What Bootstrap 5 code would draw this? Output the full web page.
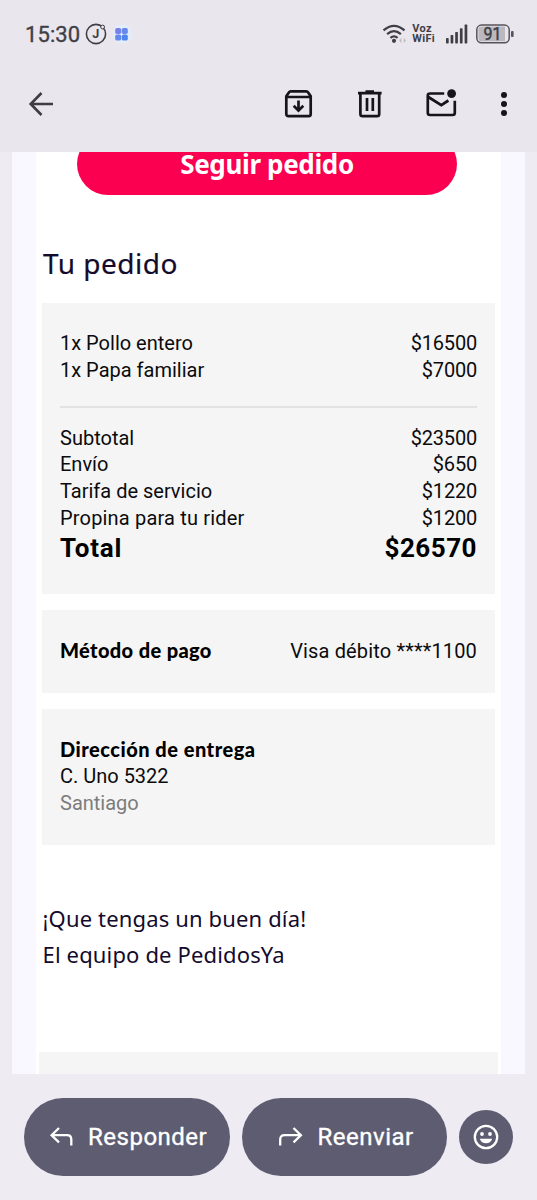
<!DOCTYPE html>
<html lang="es">
<head>
<meta charset="utf-8">
<meta name="viewport" content="width=device-width, initial-scale=1">
<title>Tu pedido</title>
<link href="https://cdn.jsdelivr.net/npm/bootstrap@5.3.0/dist/css/bootstrap.min.css" rel="stylesheet">
<style>
body{font-family:Roboto,"Liberation Sans",sans-serif;background:#eeebf3;color:#0b0b0d;height:1200px;overflow:hidden}
svg{display:block;flex:none}
.top-area{height:152px;background:#e9e6ed}
.status-bar{height:68px;padding:0 23px 0 25px;color:#413f46}
.clock{font-size:22px;letter-spacing:.1px;-webkit-text-stroke:.35px #413f46}
.voz{font-size:11px;line-height:10.5px;font-weight:700;letter-spacing:.3px}
.toolbar{height:72px;padding:0 20px 0 27px}
.mail-view{height:922px;margin:0 12px;padding:0 24.5px 0 24px;background:#f9f7ff;overflow:hidden}
.mail-body{background:#fff;height:922px}
.track-btn{width:380px;height:62px;margin:-19px 0 0 41px;background:#fb0050;color:#fff;font:700 26px "Noto Sans",sans-serif;letter-spacing:-.35px}
.order-title{font:400 28px/36px "Noto Sans",sans-serif;letter-spacing:.5px;color:#140b2c;margin:50px 0 22px 7px;-webkit-text-stroke:.2px #140b2c}
.panel{background:#f5f5f5;width:452.5px;margin:0 0 16px 6px;padding:0 17.5px 0 18px;font-size:20px;line-height:26.8px}
.panel strong{display:block;font-family:Lato,sans-serif;font-weight:900;letter-spacing:.37px;color:#000}
.items{height:291px;padding-top:27px}
.amount{letter-spacing:-.2px}
.rule{height:2px;background:#e2e2e2;margin:22px 0 17px}
.total-row{font-size:26px;line-height:32px;font-weight:700;color:#000}
.pay{height:83px}
.pay strong{position:relative;top:-1px}
.address{height:136px;padding-top:27px}
.address strong{letter-spacing:.5px}
.city{color:#7c7c7c}
.bye{font:400 22px/36px "Noto Sans",sans-serif;letter-spacing:.15px;color:#140b2c;margin:55px 0 0 6.5px}
.foot{height:22px;margin:80px 2.5px 0 3px;background:#f5f5f5}
.actions{padding:24px 24px 0;gap:12px}
.pill{width:205.7px;height:78px;background:#5e5c71;color:#fff;font-size:24px;letter-spacing:.5px;-webkit-text-stroke:.35px #fff}
.smile{width:54px;height:54px;background:#5e5c71}
</style>
</head>
<body>
<header class="top-area">
  <div class="status-bar d-flex align-items-center">
    <span class="clock">15:30</span>
    <svg class="ms-1" width="24" height="24" viewBox="0 0 24 24" fill="none" stroke="#413f46"><circle cx="12" cy="12" r="9.6" stroke-width="1.6"/><circle cx="18.6" cy="5" r="1.9" stroke-width="1" fill="#e9e6ed"/><text x="8.2" y="16" font-family="Roboto" font-size="12.5" font-weight="700" fill="#413f46" stroke="none">J</text></svg>
    <svg class="ms-1" width="20" height="20" viewBox="0 0 20 20"><circle cx="10" cy="10" r="9.5" fill="#e4eefb"/><g fill="#6689ed"><rect x="3.2" y="4" width="6" height="6" rx="1.7" fill="#7881ea"/><rect x="9.8" y="4" width="6" height="6" rx="1.7"/><rect x="3.2" y="10.6" width="6" height="6" rx="1.7"/><rect x="9.8" y="10.6" width="6" height="6" rx="1.7" fill="#4e86f0"/></g></svg>
    <div class="ms-auto d-flex align-items-center">
      <svg width="26" height="22" viewBox="0 0 26 22" fill="none" stroke="#413f46" stroke-width="2.2"><path d="M1.5 7.4Q12 -1.8 22.5 7.4M5.1 11.2Q12 5.2 18.9 11.2M8.4 14.8Q12 11.8 15.6 14.8"/><circle cx="12" cy="17.8" r="2.1" fill="#413f46" stroke="none"/><path d="M17.3 17.5l2-2.7v5.4zM23.8 17.5l-2-2.7v5.4z" fill="#bbb8be" stroke="none"/></svg>
      <div class="voz ms-1"><div>Voz</div><div>WiFi</div></div>
      <svg style="margin-left:11px" width="22" height="20" viewBox="0 0 22 20" fill="#413f46"><rect x="0" y="14" width="2.7" height="5.5" rx=".7"/><rect x="4.6" y="11" width="2.7" height="8.5" rx=".7"/><rect x="9.2" y="8" width="2.7" height="11.5" rx=".7"/><rect x="13.9" y="4.3" width="2.7" height="15.2" rx=".7"/><rect x="18.6" y=".5" width="2.7" height="19" rx=".7"/></svg>
      <svg class="ms-2" width="38" height="20" viewBox="0 0 38 20"><rect x=".8" y="1" width="32.4" height="17.8" rx="4.8" fill="none" stroke="#55535a" stroke-width="1.5"/><path d="M5.5 2.6H29V17.2H5.5Q2.4 17.2 2.4 14V5.8Q2.4 2.6 5.5 2.6Z" fill="#bbb9bd"/><rect x="35" y="7" width="2.6" height="6" rx="1" fill="#55535a"/><text x="7.4" y="16.1" font-family="Roboto" font-size="17.5" fill="#413f46" stroke="#413f46" stroke-width=".5" textLength="18" lengthAdjust="spacingAndGlyphs">91</text></svg>
    </div>
  </div>
  <nav class="toolbar d-flex align-items-center">
    <svg width="28" height="28" viewBox="0 0 28 28" fill="none" stroke="#3f3d44" stroke-width="2.6"><path d="M26 14H4M14.5 3L3.7 14l10.8 11"/></svg>
    <svg style="margin-left:229px" width="30" height="30" viewBox="0 0 30 30" fill="none" stroke="#17151b" stroke-width="2.7"><path d="M2.3 7.2L5 3.3Q5.6 2.3 6.8 2.3H22.2Q23.4 2.3 24 3.3L26.7 7.2V25Q26.7 27.2 24.5 27.2H4.5Q2.3 27.2 2.3 25ZM2.3 8H26.7"/><path d="M14.5 11.5V21M9.7 16.8l4.8 4.8 4.8-4.8"/></svg>
    <svg style="margin-left:43px" width="26" height="30" viewBox="0 0 26 30" fill="none" stroke="#17151b" stroke-width="2.7"><path d="M1 4.2H24.6M8.5 2.5H17M3.4 4.2V25Q3.4 27.2 5.6 27.2H20Q22.2 27.2 22.2 25V4.2M10 9V22M15.8 9V22"/></svg>
    <svg style="margin-left:42px" width="34" height="32" viewBox="0 0 34 32" fill="none" stroke="#17151b" stroke-width="2.7"><path d="M19.2 5.5H5Q2.8 5.5 2.8 7.7V24.8Q2.8 27 5 27H27.6Q29.8 27 29.8 24.8V12.7M3.3 9L16.3 17.2L23.4 12.5"/><circle cx="26.6" cy="5.6" r="4.4" fill="#17151b" stroke="none"/></svg>
    <svg style="margin-left:39px" width="12" height="28" viewBox="0 0 12 28" fill="#17151b"><circle cx="6" cy="5" r="3"/><circle cx="6" cy="14" r="3"/><circle cx="6" cy="23" r="3"/></svg>
  </nav>
</header>
<main class="mail-view">
  <div class="mail-body d-flow-root overflow-hidden">
    <div class="track-btn rounded-pill d-flex align-items-center justify-content-center">Seguir pedido</div>
    <h1 class="order-title">Tu pedido</h1>
    <section class="panel items">
      <div class="d-flex justify-content-between"><span>1x Pollo entero</span><span class="amount">$16500</span></div>
      <div class="d-flex justify-content-between"><span>1x Papa familiar</span><span class="amount">$7000</span></div>
      <div class="rule"></div>
      <div class="d-flex justify-content-between"><span>Subtotal</span><span class="amount">$23500</span></div>
      <div class="d-flex justify-content-between"><span>Envío</span><span class="amount">$650</span></div>
      <div class="d-flex justify-content-between"><span>Tarifa de servicio</span><span class="amount">$1220</span></div>
      <div class="d-flex justify-content-between"><span style="letter-spacing:.18px">Propina para tu rider</span><span class="amount">$1200</span></div>
      <div class="total-row d-flex justify-content-between"><span style="letter-spacing:.8px">Total</span><span style="letter-spacing:.5px">$26570</span></div>
    </section>
    <section class="panel pay d-flex align-items-center justify-content-between"><strong>Método de pago</strong><span style="letter-spacing:.15px">Visa débito ****1100</span></section>
    <section class="panel address">
      <strong>Dirección de entrega</strong>
      <div>C. Uno 5322</div>
      <div class="city">Santiago</div>
    </section>
    <p class="bye">¡Que tengas un buen día!<br>El equipo de PedidosYa</p>
    <div class="foot"></div>
  </div>
</main>
<footer class="actions d-flex align-items-center">
  <div class="pill rounded-pill d-flex align-items-center"><svg style="margin:0 14px 0 25px" width="25" height="22" viewBox="0 0 25 22" fill="none" stroke="#fff" stroke-width="2.3"><path d="M10 2L2.6 9.2L10 16.4M2.6 9.2H18Q22.3 9.2 22.3 13.5V19.5"/></svg>Responder</div>
  <div class="pill rounded-pill d-flex align-items-center"><svg style="margin:0 15px 0 36px" width="25" height="22" viewBox="0 0 25 22" fill="none" stroke="#fff" stroke-width="2.3"><path d="M15.5 2L22.9 9.2L15.5 16.4M22.9 9.2H6.5Q2.2 9.2 2.2 13.5V19.5"/></svg>Reenviar</div>
  <div class="smile rounded-circle d-flex align-items-center justify-content-center"><svg width="26" height="26" viewBox="0 0 26 26"><circle cx="13" cy="13" r="11.2" fill="none" stroke="#fff" stroke-width="2.3"/><circle cx="9" cy="10" r="1.9" fill="#fff"/><circle cx="17" cy="10" r="1.9" fill="#fff"/><path d="M6.8 14.8H19.2Q17.7 19.3 13 19.3T6.8 14.8Z" fill="#fff"/></svg></div>
</footer>
<script src="https://cdn.jsdelivr.net/npm/bootstrap@5.3.0/dist/js/bootstrap.bundle.min.js"></script>
</body>
</html>
